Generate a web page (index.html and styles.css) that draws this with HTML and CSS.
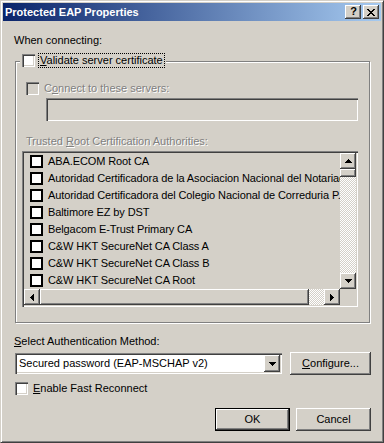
FILE: index.html
```html
<!DOCTYPE html>
<html lang="en">
<head>
    <meta charset="UTF-8">
    <title>Protected EAP Properties</title>
    <link rel="stylesheet" href="styles.css">
</head>
<body>

<div class="window">
    <div class="titlebar">
        <span class="title">Protected EAP Properties</span>
        <div class="caption-buttons">
            <span class="cap-btn help">?</span>
            <span class="cap-btn close">
                <svg width="8" height="7" viewBox="0 0 8 7" shape-rendering="crispEdges">
                    <path d="M0 0h2v1h-2z M6 0h2v1h-2z M1 1h2v1h-2z M5 1h2v1h-2z M2 2h4v1h-4z M3 3h2v1h-2z M2 4h4v1h-4z M1 5h2v1h-2z M5 5h2v1h-2z M0 6h2v1h-2z M6 6h2v1h-2z" fill="#000"/>
                </svg>
            </span>
        </div>
    </div>

    <div class="client">
        <div class="text">When connecting:</div>

        <div class="group">
            <div class="legend">
                <span class="check"></span>
                <span class="focus"><u>V</u>alidate server certificate</span>
            </div>

            <div class="row connect">
                <span class="check off"></span>
                <span class="etched">C<u>o</u>nnect to these servers:</span>
            </div>

            <div class="edit off"></div>

            <div class="etched trusted">Trusted <u>R</u>oot Certification Authorities:</div>

            <div class="listbox">
                <ul class="items">
                    <li><span class="flat-check"></span>ABA.ECOM Root CA</li>
                    <li><span class="flat-check"></span>Autoridad Certificadora de la Asociacion Nacional del Notariado Mexicano</li>
                    <li><span class="flat-check"></span>Autoridad Certificadora del Colegio Nacional de Correduria P.</li>
                    <li><span class="flat-check"></span>Baltimore EZ by DST</li>
                    <li><span class="flat-check"></span>Belgacom E-Trust Primary CA</li>
                    <li><span class="flat-check"></span>C&amp;W HKT SecureNet CA Class A</li>
                    <li><span class="flat-check"></span>C&amp;W HKT SecureNet CA Class B</li>
                    <li><span class="flat-check"></span>C&amp;W HKT SecureNet CA Root</li>
                </ul>
                <div class="vscroll">
                    <span class="sb-btn">
                        <svg width="7" height="4" viewBox="0 0 7 4" shape-rendering="crispEdges"><path d="M3 0h1v1h-1z M2 1h3v1h-3z M1 2h5v1h-5z M0 3h7v1h-7z"/></svg>
                    </span>
                    <span class="sb-thumb v"></span>
                    <span class="sb-track"></span>
                    <span class="sb-btn">
                        <svg width="7" height="4" viewBox="0 0 7 4" shape-rendering="crispEdges"><path d="M0 0h7v1h-7z M1 1h5v1h-5z M2 2h3v1h-3z M3 3h1v1h-1z"/></svg>
                    </span>
                </div>
                <div class="hscroll">
                    <span class="sb-btn">
                        <svg width="4" height="7" viewBox="0 0 4 7" shape-rendering="crispEdges"><path d="M3 0h1v7h-1z M2 1h1v5h-1z M1 2h1v3h-1z M0 3h1v1h-1z"/></svg>
                    </span>
                    <span class="sb-thumb h"></span>
                    <span class="sb-track"></span>
                    <span class="sb-btn">
                        <svg width="4" height="7" viewBox="0 0 4 7" shape-rendering="crispEdges"><path d="M0 0h1v7h-1z M1 1h1v5h-1z M2 2h1v3h-1z M3 3h1v1h-1z"/></svg>
                    </span>
                </div>
                <div class="corner"></div>
            </div>
        </div>

        <div class="text method"><u>S</u>elect Authentication Method:</div>

        <div class="method-row">
            <div class="combo">
                <span class="combo-text">Secured password (EAP-MSCHAP v2)</span>
                <span class="sb-btn drop">
                    <svg width="7" height="4" viewBox="0 0 7 4" shape-rendering="crispEdges"><path d="M0 0h7v1h-7z M1 1h5v1h-5z M2 2h3v1h-3z M3 3h1v1h-1z"/></svg>
                </span>
            </div>
            <button class="btn configure"><u>C</u>onfigure...</button>
        </div>

        <div class="row fast">
            <span class="check"></span>
            <span><u>E</u>nable Fast Reconnect</span>
        </div>

        <div class="actions">
            <button class="btn default">OK</button>
            <button class="btn">Cancel</button>
        </div>
    </div>
</div>

</body>
</html>
```

FILE: styles.css
```css
* {
    box-sizing: border-box;
}

body {
    margin: 0;
    background-color: #d4d0c8;
    color: #000;
    font-family: "Liberation Sans", Arial, sans-serif;
    font-size: 11px;
    line-height: 13px;
}

u {
    text-decoration: underline;
    text-underline-offset: 1px;
}

.window {
    width: 384px;
    height: 443px;
    padding: 2px;
    background-color: #d4d0c8;
    border: 1px solid;
    border-color: #d4d0c8 #404040 #404040 #d4d0c8;
    box-shadow: inset 1px 1px #fff, inset -1px -1px #808080;
}

/* title bar */
.titlebar {
    height: 18px;
    display: flex;
    align-items: center;
    justify-content: space-between;
    padding: 0 2px;
    background: linear-gradient(to right, #0a246a, #a6caf0);
}

.title {
    color: #fff;
    font-weight: bold;
}

.caption-buttons {
    display: flex;
    gap: 2px;
}

.cap-btn {
    width: 16px;
    height: 14px;
    display: flex;
    align-items: center;
    justify-content: center;
    background-color: #d4d0c8;
    box-shadow: inset -1px -1px #404040, inset 1px 1px #fff, inset -2px -2px #808080;
}

    .cap-btn.help {
        font-weight: bold;
        font-size: 11px;
        padding: 0 0 1px 1px;
    }

/* client area */
.client {
    padding: 13px 10px 0 11px;
}

.text {
    height: 13px;
    white-space: nowrap;
}

.etched {
    color: #808080;
    text-shadow: 1px 1px #fff;
    white-space: nowrap;
}

.row {
    display: flex;
    align-items: center;
    height: 13px;
}

    .row .check {
        margin-right: 5px;
    }

.check {
    flex: none;
    width: 13px;
    height: 13px;
    background-color: #fff;
    box-shadow: inset 1px 1px #808080, inset 2px 2px #404040, inset -1px -1px #fff, inset -2px -2px #d4d0c8;
}

    .check.off {
        background-color: #d4d0c8;
    }

/* group box */
.group {
    margin: 14px 0 0 1px;
    width: 355px;
    height: 262px;
    padding: 0 0 0 10px;
    border: 1px solid #808080;
    box-shadow: inset 1px 1px #fff, 1px 1px #fff;
}

.legend {
    display: flex;
    align-items: center;
    width: max-content;
    margin: -8px 0 0 -6px;
    padding: 0 2px;
    background-color: #d4d0c8;
}

    .legend .focus {
        margin-left: 4px;
        padding: 0 1px;
        outline: 1px dotted #000;
        outline-offset: 0;
    }

.connect {
    margin-top: 15px;
}

.edit {
    margin: 3px 0 0 20px;
    width: 312px;
    height: 23px;
    background-color: #fff;
    box-shadow: inset 1px 1px #808080, inset 2px 2px #404040, inset -1px -1px #fff, inset -2px -2px #d4d0c8;
}

    .edit.off {
        background-color: #d4d0c8;
    }

.trusted {
    margin-top: 14px;
    height: 13px;
}

/* list with checkboxes */
.listbox {
    margin: 3px 0 0 -4px;
    width: 336px;
    height: 156px;
    padding: 2px;
    display: grid;
    grid-template-columns: 1fr 16px;
    grid-template-rows: 1fr 16px;
    background-color: #d4d0c8;
    box-shadow: inset 1px 1px #808080, inset 2px 2px #404040, inset -1px -1px #fff, inset -2px -2px #d4d0c8;
}

.items {
    list-style: none;
    margin: 0;
    padding: 0;
    overflow: hidden;
}

    .items li {
        height: 17px;
        display: flex;
        align-items: center;
        padding-left: 6px;
        white-space: nowrap;
        letter-spacing: -0.1px;
    }

.flat-check {
    flex: none;
    width: 13px;
    height: 13px;
    margin-right: 5px;
    background-color: #fff;
    border: 2px solid #000;
}

.vscroll, .hscroll {
    display: flex;
    background-image: conic-gradient(#fff 25%, #d4d0c8 0 50%, #fff 0 75%, #d4d0c8 0);
    background-size: 2px 2px;
}

.vscroll {
    flex-direction: column;
}

.sb-btn, .sb-thumb, .btn {
    background-color: #d4d0c8;
    box-shadow: inset -1px -1px #404040, inset 1px 1px #fff, inset -2px -2px #808080;
}

.sb-btn {
    flex: none;
    width: 16px;
    height: 16px;
    display: flex;
    align-items: center;
    justify-content: center;
}

.sb-thumb.v {
    height: 8px;
}

.sb-thumb.h {
    width: 269px;
}

.sb-track {
    flex: 1;
}

.corner {
    background-color: #d4d0c8;
}

/* authentication method */
.method {
    margin-top: 12px;
}

.method-row {
    display: flex;
    align-items: center;
    margin-top: 4px;
    height: 23px;
}

.combo {
    margin-left: 1px;
    width: 267px;
    height: 21px;
    padding: 2px;
    display: flex;
    align-items: center;
    justify-content: space-between;
    background-color: #fff;
    box-shadow: inset 1px 1px #808080, inset 2px 2px #404040, inset -1px -1px #fff, inset -2px -2px #d4d0c8;
}

.combo-text {
    padding-left: 2px;
    white-space: nowrap;
}

.sb-btn.drop {
    height: 17px;
}

.btn {
    height: 23px;
    width: 75px;
    padding: 0;
    border: none;
    font: inherit;
    color: #000;
}

    .btn.configure {
        width: 81px;
        margin-left: auto;
    }

    .btn.default {
        border: 1px solid #000;
    }

.fast {
    margin: 7px 0 0 1px;
}

.actions {
    display: flex;
    justify-content: flex-end;
    gap: 6px;
    margin-top: 13px;
}
```
